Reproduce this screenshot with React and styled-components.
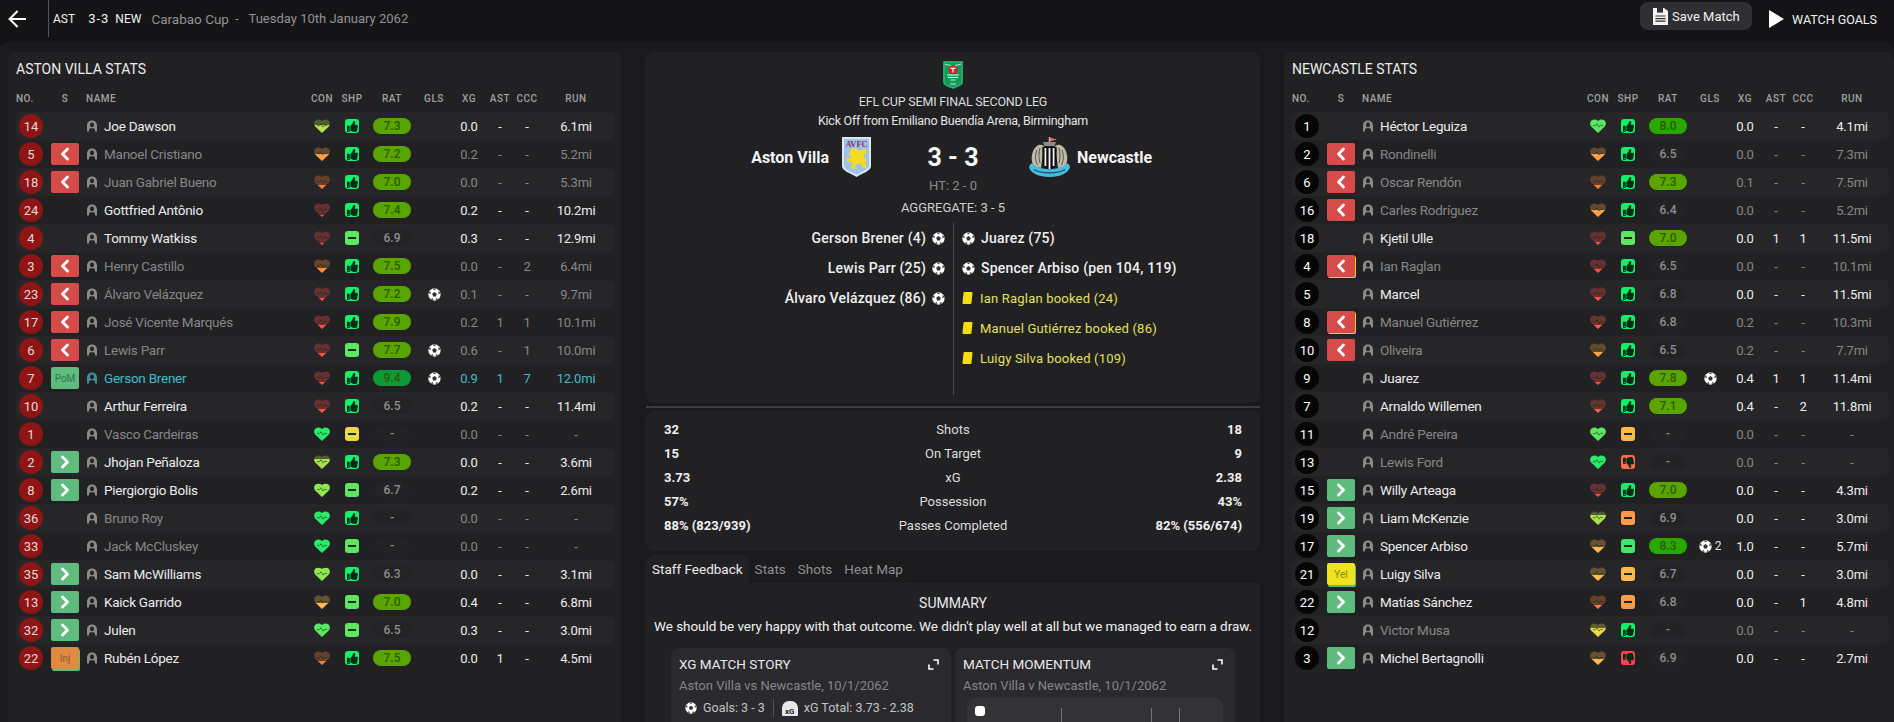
import React, { useId } from "react";
import styled, { createGlobalStyle } from "styled-components";
import { ChevronLeft, ChevronRight } from "lucide-react";
import { FaThumbsUp, FaThumbsDown } from "react-icons/fa";

const GREEN = "#2bea6a";
const SOFT_GREEN = "#5be860";
const LEAF = "#90e850";
const LIME = "#b4e04c";
const YELLOW = "#e8d84a";
const AMBER = "#ffb84a";
const ORANGE = "#ffa040";
const EMBER = "#ff7a3d";
const RED = "#ff4b4b";

// no, name, sub, heart colour, heart level, shape, shape colour, rating, goals, xg, ast, ccc, run, dim
const villa = [
  [14, "Joe Dawson", "", LIME, 0.6, "up", "", "7.3", "", "0.0", "-", "-", "6.1mi"],
  [5, "Manoel Cristiano", "off", ORANGE, 0.5, "up", "", "7.2", "", "0.2", "-", "-", "5.2mi", true],
  [18, "Juan Gabriel Bueno", "off", EMBER, 0.3, "up", "", "7.0", "", "0.0", "-", "-", "5.3mi", true],
  [24, "Gottfried Antônio", "", RED, 0.15, "up", "", "7.4", "", "0.2", "-", "-", "10.2mi"],
  [4, "Tommy Watkiss", "", RED, 0.15, "mid", SOFT_GREEN, "6.9", "", "0.3", "-", "-", "12.9mi"],
  [3, "Henry Castillo", "off", "#ff8f3d", 0.4, "up", "", "7.5", "", "0.0", "-", "2", "6.4mi", true],
  [23, "Álvaro Velázquez", "off", RED, 0.25, "up", "", "7.2", "1", "0.1", "-", "-", "9.7mi", true],
  [17, "José Vicente Marqués", "off", RED, 0.3, "up", "", "7.9", "", "0.2", "1", "1", "10.1mi", true],
  [6, "Lewis Parr", "off", RED, 0.3, "mid", SOFT_GREEN, "7.7", "1", "0.6", "-", "1", "10.0mi", true],
  [7, "Gerson Brener", "pom", RED, 0.2, "up", "", "9.4", "1", "0.9", "1", "7", "12.0mi", "pom"],
  [10, "Arthur Ferreira", "", RED, 0.3, "up", "", "6.5", "", "0.2", "-", "-", "11.4mi"],
  [1, "Vasco Cardeiras", "", GREEN, 1, "mid", YELLOW, "-", "", "0.0", "-", "-", "-", true],
  [2, "Jhojan Peñaloza", "on", "#a8e050", 0.75, "up", "", "7.3", "", "0.0", "-", "-", "3.6mi"],
  [8, "Piergiorgio Bolis", "on", LEAF, 0.95, "mid", SOFT_GREEN, "6.7", "", "0.2", "-", "-", "2.6mi"],
  [36, "Bruno Roy", "", GREEN, 1, "up", "", "-", "", "0.0", "-", "-", "-", true],
  [33, "Jack McCluskey", "", GREEN, 1, "mid", SOFT_GREEN, "-", "", "0.0", "-", "-", "-", true],
  [35, "Sam McWilliams", "on", LEAF, 0.95, "up", "", "6.3", "", "0.0", "-", "-", "3.1mi"],
  [13, "Kaick Garrido", "on", AMBER, 0.45, "mid", SOFT_GREEN, "7.0", "", "0.4", "-", "-", "6.8mi"],
  [32, "Julen", "on", SOFT_GREEN, 1, "mid", SOFT_GREEN, "6.5", "", "0.3", "-", "-", "3.0mi"],
  [22, "Rubén López", "inj", EMBER, 0.3, "up", "", "7.5", "", "0.0", "1", "-", "4.5mi"],
];

const newcastle = [
  [1, "Héctor Leguiza", "", SOFT_GREEN, 1, "up", "", "8.0", "", "0.0", "-", "-", "4.1mi"],
  [2, "Rondinelli", "off", ORANGE, 0.5, "up", "", "6.5", "", "0.0", "-", "-", "7.3mi", true],
  [6, "Oscar Rendón", "off", EMBER, 0.3, "up", "", "7.3", "", "0.1", "-", "-", "7.5mi", true],
  [16, "Carles Rodríguez", "off", ORANGE, 0.5, "up", "", "6.4", "", "0.0", "-", "-", "5.2mi", true],
  [18, "Kjetil Ulle", "", RED, 0.2, "mid", SOFT_GREEN, "7.0", "", "0.0", "1", "1", "11.5mi"],
  [4, "Ian Raglan", "offyel", RED, 0.3, "up", "", "6.5", "", "0.0", "-", "-", "10.1mi", true],
  [5, "Marcel", "", RED, 0.3, "up", "", "6.8", "", "0.0", "-", "-", "11.5mi"],
  [8, "Manuel Gutiérrez", "offyel", "#ff5a45", 0.3, "up", "", "6.8", "", "0.2", "-", "-", "10.3mi", true],
  [10, "Oliveira", "off", ORANGE, 0.4, "up", "", "6.5", "", "0.2", "-", "-", "7.7mi", true],
  [9, "Juarez", "", RED, 0.2, "up", "", "7.8", "1", "0.4", "1", "1", "11.4mi"],
  [7, "Arnaldo Willemen", "", "#ff5a45", 0.3, "up", "", "7.1", "", "0.4", "-", "2", "11.8mi"],
  [11, "André Pereira", "", SOFT_GREEN, 1, "mid", AMBER, "-", "", "0.0", "-", "-", "-", true],
  [13, "Lewis Ford", "", GREEN, 1, "down", "#ff6a4a", "-", "", "0.0", "-", "-", "-", true],
  [15, "Willy Arteaga", "on", RED, 0.25, "up", "", "7.0", "", "0.0", "-", "-", "4.3mi"],
  [19, "Liam McKenzie", "on", "#a8e050", 0.75, "mid", "#ff9a4a", "6.9", "", "0.0", "-", "-", "3.0mi"],
  [17, "Spencer Arbiso", "on", AMBER, 0.45, "mid", "#3ee86a", "8.3", "2", "1.0", "-", "-", "5.7mi"],
  [21, "Luigy Silva", "yel", AMBER, 0.45, "mid", AMBER, "6.7", "", "0.0", "-", "-", "3.0mi"],
  [22, "Matías Sánchez", "on", EMBER, 0.3, "mid", "#ff9a4a", "6.8", "", "0.0", "-", "1", "4.8mi"],
  [12, "Victor Musa", "", YELLOW, 0.7, "up", "", "-", "", "0.0", "-", "-", "-", true],
  [3, "Michel Bertagnolli", "on", AMBER, 0.45, "down", "#ff4050", "6.9", "", "0.0", "-", "-", "2.7mi"],
];

const matchStats = [
  ["32", "Shots", "18"],
  ["15", "On Target", "9"],
  ["3.73", "xG", "2.38"],
  ["57%", "Possession", "43%"],
  ["88% (823/939)", "Passes Completed", "82% (556/674)"],
];

const Heart = ({ color, level }) => {
  const id = "h" + useId().replace(/[^a-zA-Z0-9]/g, "");
  const edge = 1 - level;
  return (
    <svg width="16" height="16" viewBox="0 0 16 18" preserveAspectRatio="none">
      <defs>
        <linearGradient id={id} x1="0" y1="0" x2="0" y2="1">
          <stop offset={edge} stopColor={`color-mix(in srgb, ${color} 30%, #252525)`} />
          <stop offset={edge} stopColor={color} />
        </linearGradient>
      </defs>
      <path
        d="M8 17 L1.2 9.6 C-0.6 7.4 0 3.6 2.2 2.3 C4.2 1.1 6.6 1.6 8 3.4 C9.4 1.6 11.8 1.1 13.8 2.3 C16 3.6 16.6 7.4 14.8 9.6 Z"
        fill={`url(#${id})`}
      />
      <path
        d="M3 8.6 L5.6 8.6 L7 6.4 L9 10.2 L10.4 8.2 L13 8.6"
        fill="none"
        stroke="rgba(20,40,20,0.65)"
        strokeWidth="0.9"
      />
    </svg>
  );
};

const Ball = ({ size = 13 }) => (
  <svg width={size} height={size} viewBox="0 0 14 14">
    <circle cx="7" cy="7" r="6.6" fill="#fff" />
    <path d="M7 4.4 L9.5 6.2 L8.5 9.1 L5.5 9.1 L4.5 6.2 Z" fill="#333" />
    <path d="M5 .8 L9 .8 L7 2.4 Z M.6 5.4 L2.6 3.4 L2.8 6.6 Z M13.4 5.4 L11.4 3.4 L11.2 6.6 Z M3.2 12.2 L4.6 10.4 L6 12.8 Z M10.8 12.2 L9.4 10.4 L8 12.8 Z" fill="#333" />
  </svg>
);

const Person = () => (
  <svg width="12" height="12" viewBox="0 0 12 12">
    <path
      d="M6 .4 C2.8 .4 1 2.6 1 5.4 L1 11.4 L3 11.4 L3 9.8 C3 8.8 4 8.2 6 8.2 C8 8.2 9 8.8 9 9.8 L9 11.4 L11 11.4 L11 5.4 C11 2.6 9.2 .4 6 .4 Z M6 2.6 C7.3 2.6 8 3.6 8 4.8 C8 6 7.2 7.2 6 7.2 C4.8 7.2 4 6 4 4.8 C4 3.6 4.7 2.6 6 2.6 Z"
      fill="currentColor"
      fillRule="evenodd"
    />
  </svg>
);

const Expand = () => (
  <svg width="11" height="11" viewBox="0 0 11 11" fill="none" stroke="#fff" strokeWidth="1.6">
    <path d="M5.5 1 L10 1 L10 5.5" />
    <path d="M1 5.5 L1 10 L5.5 10" />
  </svg>
);

const CupLogo = () => (
  <svg width="20" height="28" viewBox="0 0 20 28">
    <path d="M0 0 L20 0 L20 21 C20 25 14 26 10 28 C6 26 0 25 0 21 Z" fill="#0f8a4f" />
    <path d="M1 1 L19 1 L19 21 C19 24 14 25 10 27 C6 25 1 24 1 21 Z" fill="#109a58" stroke="#7fd8a8" strokeWidth=".5" />
    <path d="M2 3 C5 5 7 3 8 5 M18 3 C15 5 13 3 12 5" stroke="#bfeccf" strokeWidth="1" fill="none" />
    <circle cx="10" cy="9" r="4.6" fill="#d2232a" />
    <path d="M7.6 7.4 H12.4 M10 7.4 V11.6" stroke="#fff" strokeWidth="1.2" />
    <path d="M4 14 H16 M5 16.5 H15" stroke="#e8fff2" strokeWidth="1" />
    <path d="M7.5 19 H12.5 M7 23 H13" stroke="#bfeccf" strokeWidth="1" />
  </svg>
);

const VillaCrest = () => (
  <svg width="31" height="42" viewBox="0 0 31 42">
    <path d="M1 1 L30 1 L30 30 C30 35 22 37 15.5 41 C9 37 1 35 1 30 Z" fill="#dfe6ee" />
    <path d="M3 3 L28 3 L28 29.5 C28 33.5 21 35.5 15.5 38.6 C10 35.5 3 33.5 3 29.5 Z" fill="#9ec3ea" />
    <text x="15.5" y="10.5" textAnchor="middle" fontFamily="Liberation Serif, serif" fontWeight="700" fontSize="8.4" fill="#8c2f63">
      AVFC
    </text>
    <path
      d="M10 13 L15 12 L17 14.6 L21 14.2 L25 12.4 L25.6 17 L22.6 18.4 L22.6 21.4 L26 23 L24 27 L26 32 L21.6 31.4 L19.6 27.6 L15 28.6 L14 33 L9.4 32.2 L11.6 27.4 L9.6 25.4 L6.6 26.6 L5 21.6 L8.8 22.4 L10.6 20.6 L7.4 19 L9 16.6 Z"
      fill="#f6dc1e"
    />
  </svg>
);

const NewcastleCrest = () => (
  <svg width="43" height="42" viewBox="0 0 43 42">
    <path d="M21.5 1 L21.5 9" stroke="#d4d4d4" strokeWidth="1.4" />
    <path d="M21.5 1.4 L29 3.6 L21.5 5.6 Z" fill="#d9736f" />
    <path d="M15 6 L28 6 L26.6 10 L16.4 10 Z" fill="#8d8d86" />
    <path d="M6 31 C1.4 23 4 12 10.6 9 C14 7.8 16.6 9.6 17 13 L14.6 12.6 L15 18 L13 32 Z" fill="#bdb9a6" />
    <path d="M9 14 C7 19 7 24 9.6 29 M12 12 C10.6 17 10.6 22 12 27" stroke="#55534a" strokeWidth="1" fill="none" />
    <path d="M37 31 C41.6 23 39 12 32.4 9 C29 7.8 26.4 9.6 26 13 L28.4 12.6 L28 18 L30 32 Z" fill="#bdb9a6" />
    <path d="M34 14 C36 19 36 24 33.4 29 M31 12 C32.4 17 32.4 22 31 27" stroke="#55534a" strokeWidth="1" fill="none" />
    <path d="M14.4 11 L28.6 11 L28.6 26 C28.6 30 24 32.6 21.5 33.6 C19 32.6 14.4 30 14.4 26 Z" fill="#0c0c0c" />
    <path d="M17.4 12 V30 M21.5 12 V33 M25.6 12 V30" stroke="#f2f2f2" strokeWidth="1.8" />
    <path d="M1 31 C2 28 3 27 4.4 27.6 C11 35 32 35 38.6 27.6 C40 27 41 28 42 31 C41 37 32 41 21.5 41 C11 41 2 37 1 31 Z" fill="#49b9de" />
    <path d="M6 33.6 C13 38 30 38 37 33.6" stroke="#14506a" strokeWidth="1.2" fill="none" />
  </svg>
);

const Floppy = () => (
  <svg width="15" height="17" viewBox="0 0 15 17">
    <path d="M0 0 H11 L15 3 V17 H0 Z" fill="#f4f4f4" />
    <path d="M4 0 H10 V4.6 H4 Z" fill="#2f2f33" />
    <path d="M2.4 8 H12.6 M2.4 10.6 H12.6 M2.4 13.2 H12.6" stroke="#2f2f33" strokeWidth="1.2" />
  </svg>
);

const BackArrow = () => (
  <svg width="18" height="18" viewBox="0 0 18 18" fill="none" stroke="#fff" strokeWidth="2">
    <path d="M18 9 H2" />
    <path d="M9.6 1 L1.6 9 L9.6 17" />
  </svg>
);

const Play = () => (
  <svg width="15" height="18" viewBox="0 0 15 18">
    <path d="M0 0 L15 9 L0 18 Z" fill="#fff" />
  </svg>
);

const chevron = { size: 20, strokeWidth: 3.4, color: "#fff" };

const subContent = {
  off: <ChevronLeft {...chevron} />,
  offyel: <ChevronLeft {...chevron} />,
  on: <ChevronRight {...chevron} />,
  pom: "PoM",
  inj: "Inj",
  yel: "Yel",
};

const PlayerRow = ({ p }) => {
  const [no, name, sub, heart, level, shape, shapeColor, rat, gls, xg, ast, ccc, run, dim] = p;
  const tone = dim === "pom" ? "pom" : dim ? "dim" : "on";
  const ShapeIcon = shape === "up" ? FaThumbsUp : FaThumbsDown;
  return (
    <Row>
      <Cell><Number>{no}</Number></Cell>
      <Cell>{sub && <SubBadge $kind={sub}>{subContent[sub]}</SubBadge>}</Cell>
      <NameCell $tone={tone}>
        <PersonWrap $tone={tone}><Person /></PersonWrap>
        {name}
      </NameCell>
      <Cell><Heart color={heart} level={level} /></Cell>
      <Cell>
        <ShapeBox $color={shapeColor}>
          {shape === "mid" ? <Dash /> : <ShapeIcon size={11} color="#052a16" />}
        </ShapeBox>
      </Cell>
      <Cell><Rating $value={rat}>{rat}</Rating></Cell>
      <Cell>
        {gls && <Ball />}
        {gls && gls !== "1" && <GoalCount>{gls}</GoalCount>}
      </Cell>
      <Value $tone={tone}>{xg}</Value>
      <Value $tone={tone}>{ast}</Value>
      <Value $tone={tone}>{ccc}</Value>
      <Value $tone={tone}>{run}</Value>
    </Row>
  );
};

const TeamPanel = ({ title, players, $away }) => (
  <Panel $away={$away}>
    <PanelTitle>{title}</PanelTitle>
    <HeadRow>
      <NoHead>NO.</NoHead>
      <span>S</span>
      <NameHead>NAME</NameHead>
      <span>CON</span>
      <span>SHP</span>
      <span>RAT</span>
      <span>GLS</span>
      <span>XG</span>
      <span>AST</span>
      <span>CCC</span>
      <span>RUN</span>
    </HeadRow>
    {players.map((p) => (
      <PlayerRow key={p[1]} p={p} />
    ))}
  </Panel>
);

const App = () => (
  <>
    <GlobalStyle />
    <Page>
      <TopBar>
        <BackButton><BackArrow /></BackButton>
        <TopDivider />
        <Abbrev>AST</Abbrev>
        <TopScore>3-3</TopScore>
        <Abbrev>NEW</Abbrev>
        <Competition>Carabao Cup</Competition>
        <Competition $dash>-</Competition>
        <Competition $date>Tuesday 10th January 2062</Competition>
        <TopRight>
          <SaveButton><Floppy />Save Match</SaveButton>
          <WatchButton><Play />WATCH GOALS</WatchButton>
        </TopRight>
      </TopBar>
      <Body>
        <TeamPanel title="ASTON VILLA STATS" players={villa} />
        <Centre>
          <MatchPanel>
            <CupLogo />
            <RoundName>EFL CUP SEMI FINAL SECOND LEG</RoundName>
            <KickOff>Kick Off from Emiliano Buendía Arena, Birmingham</KickOff>
            <ScoreRow>
              <TeamSide $home>
                <TeamName>Aston Villa</TeamName>
                <VillaCrest />
              </TeamSide>
              <Score>3 - 3</Score>
              <TeamSide>
                <NewcastleCrest />
                <TeamName>Newcastle</TeamName>
              </TeamSide>
            </ScoreRow>
            <HalfTime>HT: 2 - 0</HalfTime>
            <Aggregate>AGGREGATE: 3 - 5</Aggregate>
            <Events>
              <EventColumn $home>
                <EventRow $home>Gerson Brener (4) <Ball /></EventRow>
                <EventRow $home>Lewis Parr (25) <Ball /></EventRow>
                <EventRow $home>Álvaro Velázquez (86) <Ball /></EventRow>
              </EventColumn>
              <EventColumn>
                <EventRow><Ball /> Juarez (75)</EventRow>
                <EventRow><Ball /> Spencer Arbiso (pen 104, 119)</EventRow>
                <EventRow $booked><YellowCard /> Ian Raglan booked (24)</EventRow>
                <EventRow $booked><YellowCard /> Manuel Gutiérrez booked (86)</EventRow>
                <EventRow $booked><YellowCard /> Luigy Silva booked (109)</EventRow>
              </EventColumn>
            </Events>
          </MatchPanel>
          <Rule />
          <StatsPanel>
            {matchStats.map(([a, label, b]) => (
              <StatRow key={label}>
                <StatValue>{a}</StatValue>
                <StatLabel>{label}</StatLabel>
                <StatValue $right>{b}</StatValue>
              </StatRow>
            ))}
          </StatsPanel>
          <Tabs>
            <Tab $active>Staff Feedback</Tab>
            <Tab>Stats</Tab>
            <Tab>Shots</Tab>
            <Tab>Heat Map</Tab>
          </Tabs>
          <Feedback>
            <SummaryTitle>SUMMARY</SummaryTitle>
            <SummaryText>We should be very happy with that outcome. We didn't play well at all but we managed to earn a draw.</SummaryText>
            <Cards>
              <Card>
                <CardHead>XG MATCH STORY<Expand /></CardHead>
                <CardSub>Aston Villa vs Newcastle, 10/1/2062</CardSub>
                <Legend>
                  <Ball size={12} />
                  <span>Goals: 3 - 3</span>
                  <LegendBar />
                  <XgMark>xG</XgMark>
                  <span>xG Total: 3.73 - 2.38</span>
                </Legend>
              </Card>
              <Card>
                <CardHead>MATCH MOMENTUM<Expand /></CardHead>
                <CardSub>Aston Villa v Newcastle, 10/1/2062</CardSub>
                <ChartBox>
                  <Marker />
                  <Tick $left={94} />
                  <Tick $left={184} />
                  <Tick $left={212} />
                </ChartBox>
              </Card>
            </Cards>
          </Feedback>
        </Centre>
        <TeamPanel title="NEWCASTLE STATS" players={newcastle} $away />
      </Body>
    </Page>
  </>
);

const GlobalStyle = createGlobalStyle`
  html, body {
    margin: 0;
    padding: 0;
    background: #141417;
    overflow: hidden;
  }
  * {
    box-sizing: border-box;
  }
  body {
    font-family: Roboto, "Noto Sans", sans-serif;
    color: #f0f0f0;
  }
`;

const Page = styled.div`
  width: 1894px;
  height: 722px;
  overflow: hidden;
  display: flex;
  flex-direction: column;
`;

const TopBar = styled.div`
  height: 37px;
  flex: none;
  display: flex;
  align-items: center;
  background: #141417;
  font-size: 13px;
`;

const BackButton = styled.div`
  width: 48px;
  padding-left: 8px;
  display: flex;
  align-items: center;
`;

const TopDivider = styled.div`
  width: 1px;
  height: 37px;
  background: #55555a;
  margin-right: 4px;
`;

const Abbrev = styled.span`
  font-size: 12px;
  color: #f0f0f0;
`;

const TopScore = styled.span`
  margin: 0 6px 0 13px;
  letter-spacing: 1px;
  color: #f0f0f0;
`;

const Competition = styled.span`
  color: #929292;
  font-size: ${(p) => (p.$date || p.$dash ? "13px" : "13.5px")};
  margin-left: ${(p) => (p.$dash ? "6px" : "10px")};
`;

const TopRight = styled.div`
  margin-left: auto;
  display: flex;
  align-items: center;
  gap: 17px;
  padding-right: 17px;
`;

const SaveButton = styled.div`
  width: 112px;
  height: 28px;
  margin-top: -5px;
  padding-left: 13px;
  display: flex;
  align-items: center;
  gap: 4px;
  border-radius: 8px;
  background: #2f2f33;
  font-size: 13px;
`;

const WatchButton = styled.div`
  display: flex;
  align-items: center;
  gap: 8px;
  font-size: 12.5px;
  padding-top: 1px;
`;

const Body = styled.div`
  flex: 1;
  margin-top: 5px;
  padding: 10px 0 0 8px;
  background: #1a1a1d;
  border-radius: 8px 8px 0 0;
  display: grid;
  grid-template-columns: 614px 614px 610px;
  column-gap: 24px;
  min-height: 0;
`;

const Panel = styled.section`
  background: #212124;
  border-radius: 8px 8px 0 0;
  padding: 8px ${(p) => (p.$away ? "5px" : "8px")} 0 8px;
  --circle: ${(p) => (p.$away ? "#060606" : "#8f1414")};
  --circle-text: ${(p) => (p.$away ? "#fff" : "#e4dada")};
`;

const PanelTitle = styled.h2`
  margin: 0;
  font-size: 14px;
  line-height: 18px;
  font-weight: 400;
  color: #ececec;
`;

const columns = "30px 38px 223px 30px 30px 50px 34px 36px 26px 28px 70px";

const HeadRow = styled.div`
  display: grid;
  grid-template-columns: ${columns};
  margin-top: 12px;
  margin-bottom: 6px;
  height: 16px;
  align-items: center;
  font-size: 10px;
  font-weight: 500;
  letter-spacing: 0.5px;
  color: #a0a0a0;
  text-align: center;
`;

const NoHead = styled.span`
  text-align: left;
`;

const NameHead = styled.span`
  text-align: left;
  padding-left: 2px;
`;

const Row = styled.div`
  display: grid;
  grid-template-columns: ${columns};
  height: 28px;
  align-items: center;
  border-radius: 6px;
  &:nth-of-type(even) {
    background: #262629;
  }
`;

const Cell = styled.div`
  display: flex;
  align-items: center;
  justify-content: center;
  height: 28px;
`;

const Number = styled.div`
  width: 24px;
  height: 24px;
  flex: none;
  border-radius: 50%;
  display: flex;
  align-items: center;
  justify-content: center;
  background: var(--circle);
  color: var(--circle-text);
  font-size: 13px;
`;

const subColours = {
  off: "#d64a4a",
  offyel: "#d64a4a",
  on: "#5fbb7e",
  pom: "#5fbb7e",
  inj: "#e08a42",
  yel: "#efe31d",
};

const subEdges = {
  offyel: "1px 1px 0 #e6d21c",
  inj: "1px 2px 0 #5fbb7e",
  yel: "1px 2px 0 #5fbb7e",
};

const SubBadge = styled.div`
  width: 28px;
  height: 22px;
  border-radius: 2px;
  display: flex;
  align-items: center;
  justify-content: center;
  font-size: 10px;
  background: ${(p) => subColours[p.$kind]};
  color: ${(p) => (p.$kind === "yel" ? "#7c8a1c" : p.$kind === "inj" ? "#8f5a2a" : "#2f7a4c")};
  box-shadow: ${(p) => subEdges[p.$kind] || "none"};
`;

const toneColours = { on: "#ececec", dim: "#868686", pom: "#3fbccb" };

const NameCell = styled.div`
  display: flex;
  align-items: center;
  gap: 6px;
  padding-left: 2px;
  font-size: 13.5px;
  letter-spacing: -0.25px;
  color: ${(p) => toneColours[p.$tone]};
  white-space: nowrap;
`;

const PersonWrap = styled.span`
  display: flex;
  color: ${(p) => (p.$tone === "pom" ? "#3c8f9a" : "#8a8a8a")};
`;

const ShapeBox = styled.div`
  width: 14px;
  height: 14px;
  border-radius: 3px;
  display: flex;
  align-items: center;
  justify-content: center;
  background: ${(p) => p.$color || "#13f06a"};
`;

const Dash = styled.div`
  width: 8px;
  height: 2px;
  background: #1a2a1a;
`;

const ratingFill = (v) => {
  const n = parseFloat(v);
  if (!(n >= 7)) return "#232326";
  if (n >= 9) return "#0d9a34";
  if (n >= 8) return "#28a800";
  return "#5aa500";
};

const Rating = styled.div`
  width: 38px;
  height: 16px;
  border-radius: 8px;
  display: flex;
  align-items: center;
  justify-content: center;
  font-size: 12px;
  font-weight: 500;
  background: ${(p) => ratingFill(p.$value)};
  color: ${(p) => (parseFloat(p.$value) >= 7 ? "#2a5a08" : "#8e8e8e")};
`;

const GoalCount = styled.span`
  margin-left: 3px;
  font-size: 12px;
  color: #e0e0e0;
`;

const Value = styled.div`
  text-align: center;
  font-size: 13px;
  letter-spacing: -0.2px;
  color: ${(p) => toneColours[p.$tone]};
`;

const Centre = styled.div`
  display: flex;
  flex-direction: column;
  min-height: 0;
`;

const MatchPanel = styled.section`
  height: 351px;
  flex: none;
  padding-top: 9px;
  background: #212124;
  border-radius: 8px;
  display: flex;
  flex-direction: column;
  align-items: center;
`;

const RoundName = styled.div`
  margin-top: 5px;
  font-size: 12.5px;
  letter-spacing: -0.2px;
  line-height: 16px;
  color: #dcdcdc;
`;

const KickOff = styled.div`
  margin-top: 3px;
  font-size: 12.5px;
  letter-spacing: -0.25px;
  line-height: 16px;
  color: #e4e4e4;
`;

const ScoreRow = styled.div`
  margin-top: 7px;
  width: 100%;
  height: 42px;
  display: grid;
  grid-template-columns: 1fr 100px 1fr;
  align-items: center;
`;

const TeamSide = styled.div`
  display: flex;
  align-items: center;
  justify-content: ${(p) => (p.$home ? "flex-end" : "flex-start")};
  gap: ${(p) => (p.$home ? "12px" : "6px")};
  padding: ${(p) => (p.$home ? "0 31px 0 0" : "0 0 0 25px")};
`;

const TeamName = styled.div`
  font-size: 16px;
  font-weight: 700;
  color: #f4f4f4;
`;

const Score = styled.div`
  font-size: 25px;
  font-weight: 700;
  text-align: center;
  color: #f6f6f6;
`;

const HalfTime = styled.div`
  font-size: 13px;
  line-height: 16px;
  color: #8c8c8c;
`;

const Aggregate = styled.div`
  margin-top: 6px;
  font-size: 13px;
  line-height: 16px;
  color: #cfcfcf;
`;

const Events = styled.div`
  margin-top: 7px;
  width: 100%;
  height: 172px;
  display: grid;
  grid-template-columns: 1fr 1fr;
`;

const EventColumn = styled.div`
  padding: ${(p) => (p.$home ? "0 8px 0 0" : "0 0 0 8px")};
  border-left: ${(p) => (p.$home ? "none" : "1px solid #4a4a4d")};
`;

const EventRow = styled.div`
  height: 30px;
  display: flex;
  align-items: center;
  justify-content: ${(p) => (p.$home ? "flex-end" : "flex-start")};
  gap: 6px;
  font-size: ${(p) => (p.$booked ? "13px" : "14px")};
  font-weight: ${(p) => (p.$booked ? 400 : 500)};
  letter-spacing: 0.2px;
  color: ${(p) => (p.$booked ? "#e3e05a" : "#f0f0f0")};
`;

const YellowCard = styled.span`
  width: 9px;
  height: 12px;
  margin: 0 2px 0 1px;
  background: #f5dc12;
  border-radius: 1px;
  transform: skewX(-6deg);
`;

const Rule = styled.div`
  height: 2px;
  flex: none;
  margin: 3px 0;
  background: #3c3c3f;
`;

const StatsPanel = styled.section`
  height: 140px;
  flex: none;
  padding: 6px 18px 0 18px;
  background: #212124;
  border-radius: 8px;
`;

const StatRow = styled.div`
  height: 24px;
  display: grid;
  grid-template-columns: 1fr auto 1fr;
  align-items: center;
  font-size: 13px;
`;

const StatValue = styled.div`
  font-weight: 700;
  font-size: 13px;
  text-align: ${(p) => (p.$right ? "right" : "left")};
  color: #f0f0f0;
`;

const StatLabel = styled.div`
  color: #dcdcdc;
`;

const Tabs = styled.div`
  height: 28px;
  flex: none;
  margin-top: 4px;
  align-self: flex-start;
  display: flex;
  background: #1b1b1e;
  border-radius: 8px 8px 0 0;
  padding-right: 7px;
  font-size: 13.5px;
`;

const Tab = styled.div`
  display: flex;
  align-items: center;
  padding: 0 6px;
  border-radius: 8px 8px 0 0;
  background: ${(p) => (p.$active ? "#212124" : "transparent")};
  color: ${(p) => (p.$active ? "#ececec" : "#8e8e8e")};
`;

const Feedback = styled.section`
  flex: 1;
  background: #212124;
  padding: 11px 25px 0;
  text-align: center;
`;

const SummaryTitle = styled.div`
  font-size: 14px;
  line-height: 18px;
  color: #e8e8e8;
`;

const SummaryText = styled.div`
  margin: 5px -25px 0;
  font-size: 13.5px;
  letter-spacing: -0.06px;
  line-height: 18px;
  color: #f0f0f0;
  white-space: nowrap;
`;

const Cards = styled.div`
  margin-top: 13px;
  display: grid;
  grid-template-columns: 280px 280px;
  column-gap: 4px;
  text-align: left;
`;

const Card = styled.div`
  height: 120px;
  padding: 7px 8px 0;
  background: #2a2a2e;
  border-radius: 8px;
`;

const CardHead = styled.div`
  display: flex;
  align-items: center;
  justify-content: space-between;
  padding-right: 4px;
  font-size: 13.5px;
  line-height: 18px;
  color: #e8e8e8;
`;

const CardSub = styled.div`
  margin-top: 4px;
  font-size: 13px;
  line-height: 18px;
  color: #858585;
`;

const Legend = styled.div`
  margin: 4px 0 0 6px;
  display: flex;
  align-items: center;
  gap: 6px;
  font-size: 12.5px;
  line-height: 18px;
  color: #c4c4c4;
`;

const LegendBar = styled.div`
  width: 1px;
  height: 18px;
  margin: 0 2px;
  background: #555;
`;

const XgMark = styled.span`
  width: 16px;
  height: 15px;
  display: flex;
  align-items: flex-end;
  justify-content: center;
  background: #e8e8e8;
  border-radius: 7px 7px 1px 1px;
  color: #222;
  font-size: 8px;
  line-height: 9px;
  font-weight: 700;
`;

const ChartBox = styled.div`
  position: relative;
  height: 70px;
  margin: 3px 4px 0;
  background: #333336;
  border-radius: 8px;
`;

const Marker = styled.div`
  position: absolute;
  left: 8px;
  top: 8px;
  width: 10px;
  height: 10px;
  border-radius: 3px;
  background: #fff;
`;

const Tick = styled.div`
  position: absolute;
  left: ${(p) => p.$left}px;
  top: 10px;
  width: 1px;
  height: 30px;
  background: #77777a;
`;

export default App;
